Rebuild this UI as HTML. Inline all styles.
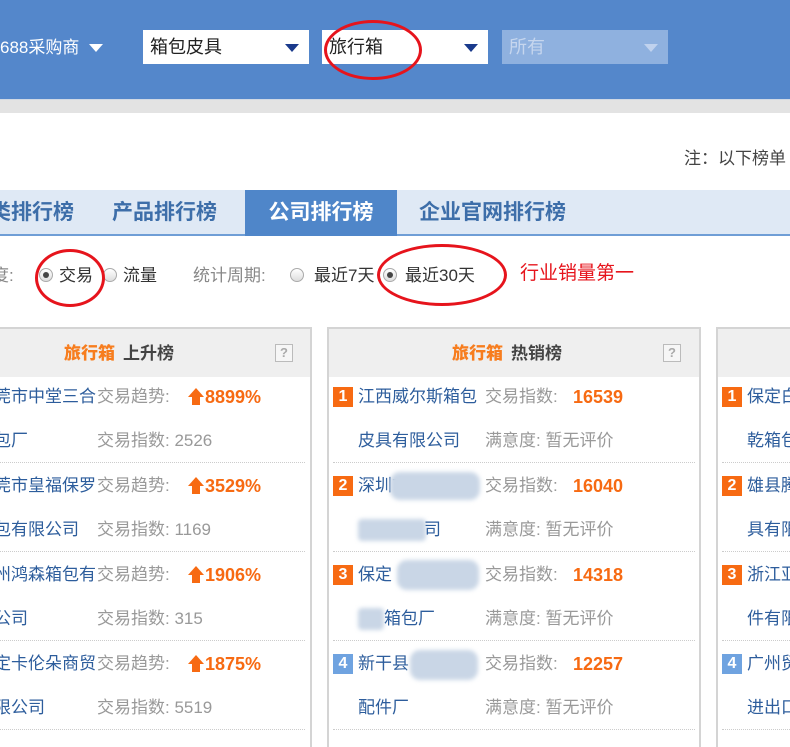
<!DOCTYPE html>
<html><head><meta charset="utf-8"><style>
*{margin:0;padding:0;box-sizing:border-box}
body{width:790px;height:740px;overflow:hidden;background:#fff;position:relative;font-family:"Liberation Sans","Noto Sans CJK SC",sans-serif;}
.a{position:absolute;white-space:nowrap;line-height:24px}
.hdr{left:0;top:0;width:790px;height:99px;background:#5487cb}
.gry{left:0;top:99px;width:790px;height:14px;background:#e3e3e3;border-top:1px solid #d0d8e4}
.sel{height:34px;top:30px;background:#fff;font-size:18px;color:#222;line-height:34px;padding-left:7px}
.tri{position:absolute;width:0;height:0;border-left:7px solid transparent;border-right:7px solid transparent;border-top:8px solid #1a3a8c;top:14px}
.tabs{left:0;top:190px;width:790px;height:46px;background:#dfe9f5;border-bottom:2px solid #6f9ed6}
.tab{top:190px;height:46px;line-height:46px;font-size:21px;color:#3d6ea9;font-weight:bold}
.rad{width:14px;height:14px;border:1px solid #aaa;border-radius:50%;background:linear-gradient(#fff,#ddd);top:268px;line-height:0}
.rad.on::after{content:"";position:absolute;left:3px;top:3px;width:6px;height:6px;border-radius:50%;background:#444}
.opt{top:264px;font-size:17px;color:#333}
.lbl{top:264px;font-size:17px;color:#888}
.panel{top:327px;height:420px;border:2px solid #d4d4d4;border-bottom:none;background:#fff}
.ph{position:absolute;left:0;right:0;top:0;height:48px;background:#efefef}
.pt{top:342px;font-size:17px;font-weight:bold;color:#444}
.pt b{color:#f77d1e;margin-right:8px}
.q{width:18px;height:18px;border:1px solid #bbb;background:#f6f6f6;color:#aaa;font-size:13px;text-align:center;line-height:16px;font-weight:bold;top:344px}
.nm{font-size:17px;color:#2d5d9c}
.k{font-size:17px;color:#999}
.v{font-size:18px;color:#f76a12;font-weight:bold}
.g{font-size:17px;color:#999}
.up{position:absolute;left:188px;width:16px;height:18px}
.up::before{content:"";position:absolute;left:0;top:0;border-left:8px solid transparent;border-right:8px solid transparent;border-bottom:9px solid #f76a12}
.up::after{content:"";position:absolute;left:4px;top:8px;width:8px;height:9px;background:#f76a12}
.sep{height:0;border-top:1px dotted #ccc}
.bd{width:20px;height:20px;color:#fff;font-size:16px;font-weight:bold;text-align:center;line-height:20px;background:#f76a12}
.bd.b{background:#6fa3e0}
.blur{background:#c9d6e6;border-radius:10px;filter:blur(2px)}
.circ{border:3px solid #e6141c;border-radius:50%}
</style></head><body>
<div class="a hdr"></div>
<div class="a gry"></div>
<div class="a" style="left:0;top:36px;font-size:17px;color:#fff">688采购商</div>
<div class="a" style="left:89px;top:44px;width:0;height:0;border-left:7px solid transparent;border-right:7px solid transparent;border-top:8px solid #fff"></div>
<div class="a sel" style="left:143px;width:166px">箱包皮具<div class="tri" style="left:142px"></div></div>
<div class="a sel" style="left:322px;width:166px">旅行箱<div class="tri" style="left:142px"></div></div>
<div class="a sel" style="left:502px;width:166px;background:#8fb1df;color:#c6d6ee">所有<div class="tri" style="left:142px;border-top-color:#c0d2ee"></div></div>
<div class="a circ" style="left:324px;top:20px;width:98px;height:60px"></div>

<div class="a" style="left:684px;top:147px;font-size:17px;color:#444">注：以下榜单</div>

<div class="a tabs"></div>
<div class="a tab" style="left:-10px">类排行榜</div>
<div class="a tab" style="left:112px">产品排行榜</div>
<div class="a tab" style="left:245px;width:152px;background:#4f86c9;color:#fff;text-align:center;height:46px">公司排行榜</div>
<div class="a tab" style="left:419px">企业官网排行榜</div>

<div class="a lbl" style="left:-8px">度:</div>
<div class="a rad on" style="left:39px"></div><div class="a opt" style="left:59px">交易</div>
<div class="a rad" style="left:103px"></div><div class="a opt" style="left:123px">流量</div>
<div class="a lbl" style="left:193px">统计周期:</div>
<div class="a rad" style="left:290px"></div><div class="a opt" style="left:314px">最近7天</div>
<div class="a rad on" style="left:383px"></div><div class="a opt" style="left:405px">最近30天</div>
<div class="a" style="left:520px;top:262px;font-size:19px;color:#e6141c">行业销量第一</div>
<div class="a circ" style="left:35px;top:249px;width:70px;height:58px"></div>
<div class="a circ" style="left:377px;top:244px;width:130px;height:62px"></div>

<div class="a panel" style="left:-5px;width:317px"><div class="ph"></div></div>
<div class="a panel" style="left:327px;width:374px"><div class="ph"></div></div>
<div class="a panel" style="left:716px;width:90px"><div class="ph"></div></div>
<div class="a pt" style="left:64px"><b>旅行箱</b>上升榜</div>
<div class="a q" style="left:275px">?</div>
<div class="a pt" style="left:452px"><b>旅行箱</b>热销榜</div>
<div class="a q" style="left:663px">?</div>

<!-- panel1 rows -->
<div class="a nm" style="left:-6px;top:385px">莞市中堂三合</div><div class="a k" style="left:97px;top:385px">交易趋势:</div><span class="up" style="top:388px"></span><div class="a v" style="left:205px;top:385px">8899%</div>
<div class="a nm" style="left:-6px;top:429px">包厂</div><div class="a g" style="left:97px;top:429px">交易指数: 2526</div>
<div class="a nm" style="left:-6px;top:474px">莞市皇福保罗</div><div class="a k" style="left:97px;top:474px">交易趋势:</div><span class="up" style="top:477px"></span><div class="a v" style="left:205px;top:474px">3529%</div>
<div class="a nm" style="left:-6px;top:518px">包有限公司</div><div class="a g" style="left:97px;top:518px">交易指数: 1169</div>
<div class="a nm" style="left:-6px;top:563px">州鸿森箱包有</div><div class="a k" style="left:97px;top:563px">交易趋势:</div><span class="up" style="top:566px"></span><div class="a v" style="left:205px;top:563px">1906%</div>
<div class="a nm" style="left:-6px;top:607px">公司</div><div class="a g" style="left:97px;top:607px">交易指数: 315</div>
<div class="a nm" style="left:-6px;top:652px">定卡伦朵商贸</div><div class="a k" style="left:97px;top:652px">交易趋势:</div><span class="up" style="top:655px"></span><div class="a v" style="left:205px;top:652px">1875%</div>
<div class="a nm" style="left:-6px;top:696px">限公司</div><div class="a g" style="left:97px;top:696px">交易指数: 5519</div>

<!-- panel2 rows -->
<div class="a bd" style="left:333px;top:387px">1</div><div class="a nm" style="left:358px;top:385px">江西威尔斯箱包</div><div class="a k" style="left:485px;top:385px">交易指数:</div><div class="a v" style="left:573px;top:385px">16539</div>
<div class="a nm" style="left:358px;top:429px">皮具有限公司</div><div class="a g" style="left:485px;top:429px">满意度: 暂无评价</div>
<div class="a bd" style="left:333px;top:476px">2</div><div class="a nm" style="left:358px;top:474px">深圳市</div><div class="a k" style="left:485px;top:474px">交易指数:</div><div class="a v" style="left:573px;top:474px">16040</div>
<div class="a blur" style="left:390px;top:472px;width:90px;height:28px"></div>
<div class="a blur" style="left:358px;top:519px;width:68px;height:22px;border-radius:4px"></div><div class="a nm" style="left:424px;top:518px">司</div><div class="a g" style="left:485px;top:518px">满意度: 暂无评价</div>
<div class="a bd" style="left:333px;top:565px">3</div><div class="a nm" style="left:358px;top:563px">保定</div><div class="a k" style="left:485px;top:563px">交易指数:</div><div class="a v" style="left:573px;top:563px">14318</div>
<div class="a blur" style="left:397px;top:560px;width:82px;height:30px"></div>
<div class="a blur" style="left:358px;top:608px;width:26px;height:22px;border-radius:4px"></div><div class="a nm" style="left:384px;top:607px">箱包厂</div><div class="a g" style="left:485px;top:607px">满意度: 暂无评价</div>
<div class="a bd b" style="left:333px;top:654px">4</div><div class="a nm" style="left:358px;top:652px">新干县</div><div class="a k" style="left:485px;top:652px">交易指数:</div><div class="a v" style="left:573px;top:652px">12257</div>
<div class="a blur" style="left:410px;top:650px;width:68px;height:30px"></div>
<div class="a nm" style="left:358px;top:696px">配件厂</div><div class="a g" style="left:485px;top:696px">满意度: 暂无评价</div>

<!-- panel3 rows -->
<div class="a bd" style="left:722px;top:387px">1</div><div class="a nm" style="left:747px;top:385px">保定白</div>
<div class="a nm" style="left:747px;top:429px">乾箱包</div>
<div class="a bd" style="left:722px;top:476px">2</div><div class="a nm" style="left:747px;top:474px">雄县腾</div>
<div class="a nm" style="left:747px;top:518px">具有限</div>
<div class="a bd" style="left:722px;top:565px">3</div><div class="a nm" style="left:747px;top:563px">浙江亚</div>
<div class="a nm" style="left:747px;top:607px">件有限</div>
<div class="a bd b" style="left:722px;top:654px">4</div><div class="a nm" style="left:747px;top:652px">广州贸</div>
<div class="a nm" style="left:747px;top:696px">进出口</div>

<!-- separators -->
<div class="a sep" style="left:0;width:305px;top:462px"></div>
<div class="a sep" style="left:0;width:305px;top:551px"></div>
<div class="a sep" style="left:0;width:305px;top:640px"></div>
<div class="a sep" style="left:0;width:305px;top:729px"></div>
<div class="a sep" style="left:333px;width:362px;top:462px"></div>
<div class="a sep" style="left:333px;width:362px;top:551px"></div>
<div class="a sep" style="left:333px;width:362px;top:640px"></div>
<div class="a sep" style="left:333px;width:362px;top:729px"></div>
<div class="a sep" style="left:722px;width:68px;top:462px"></div>
<div class="a sep" style="left:722px;width:68px;top:551px"></div>
<div class="a sep" style="left:722px;width:68px;top:640px"></div>
<div class="a sep" style="left:722px;width:68px;top:729px"></div>
</body></html>
